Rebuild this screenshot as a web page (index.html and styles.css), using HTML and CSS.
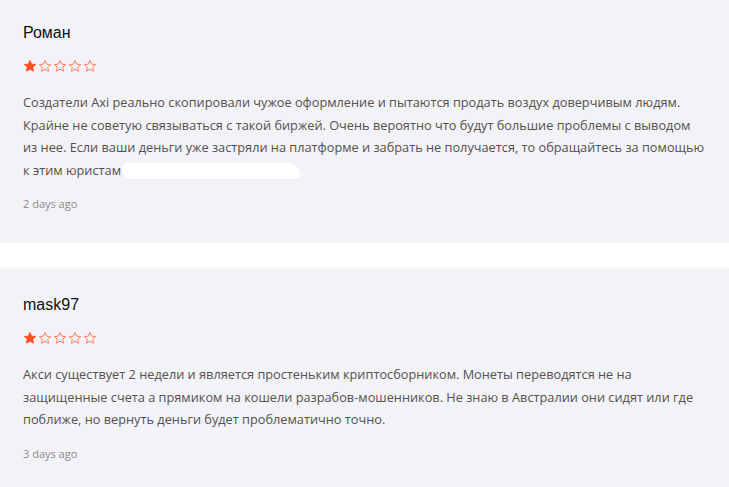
FILE: index.html
```html
<!DOCTYPE html>
<html>
<head>
    <meta charset="UTF-8">
    <title>Reviews</title>
    <link rel="stylesheet" href="styles.css">
</head>
<body>
<div class="reviews">
    <div class="review review-first">
        <div class="review-name">Роман</div>
        <div class="stars">
            <svg viewBox="0 0 24 24" class="star full"><path d="M12 2.5l2.9 6.3 6.9.7-5.2 4.6 1.5 6.8L12 17.4l-6.1 3.5 1.5-6.8-5.2-4.6 6.9-.7z"/></svg>
            <svg viewBox="0 0 24 24" class="star"><path d="M12 2.5l2.9 6.3 6.9.7-5.2 4.6 1.5 6.8L12 17.4l-6.1 3.5 1.5-6.8-5.2-4.6 6.9-.7z"/></svg>
            <svg viewBox="0 0 24 24" class="star"><path d="M12 2.5l2.9 6.3 6.9.7-5.2 4.6 1.5 6.8L12 17.4l-6.1 3.5 1.5-6.8-5.2-4.6 6.9-.7z"/></svg>
            <svg viewBox="0 0 24 24" class="star"><path d="M12 2.5l2.9 6.3 6.9.7-5.2 4.6 1.5 6.8L12 17.4l-6.1 3.5 1.5-6.8-5.2-4.6 6.9-.7z"/></svg>
            <svg viewBox="0 0 24 24" class="star"><path d="M12 2.5l2.9 6.3 6.9.7-5.2 4.6 1.5 6.8L12 17.4l-6.1 3.5 1.5-6.8-5.2-4.6 6.9-.7z"/></svg>
        </div>
        <p class="review-text">Создатели Axi реально скопировали чужое оформление и пытаются продать воздух доверчивым людям. Крайне не советую связываться с такой биржей. Очень вероятно что будут большие проблемы с выводом из нее. Если ваши деньги уже застряли на платформе и забрать не получается, то обращайтесь за помощью к этим юристам <span class="hidden-link"></span></p>
        <div class="review-date">2 days ago</div>
    </div>
    <div class="review">
        <div class="review-name">mask97</div>
        <div class="stars">
            <svg viewBox="0 0 24 24" class="star full"><path d="M12 2.5l2.9 6.3 6.9.7-5.2 4.6 1.5 6.8L12 17.4l-6.1 3.5 1.5-6.8-5.2-4.6 6.9-.7z"/></svg>
            <svg viewBox="0 0 24 24" class="star"><path d="M12 2.5l2.9 6.3 6.9.7-5.2 4.6 1.5 6.8L12 17.4l-6.1 3.5 1.5-6.8-5.2-4.6 6.9-.7z"/></svg>
            <svg viewBox="0 0 24 24" class="star"><path d="M12 2.5l2.9 6.3 6.9.7-5.2 4.6 1.5 6.8L12 17.4l-6.1 3.5 1.5-6.8-5.2-4.6 6.9-.7z"/></svg>
            <svg viewBox="0 0 24 24" class="star"><path d="M12 2.5l2.9 6.3 6.9.7-5.2 4.6 1.5 6.8L12 17.4l-6.1 3.5 1.5-6.8-5.2-4.6 6.9-.7z"/></svg>
            <svg viewBox="0 0 24 24" class="star"><path d="M12 2.5l2.9 6.3 6.9.7-5.2 4.6 1.5 6.8L12 17.4l-6.1 3.5 1.5-6.8-5.2-4.6 6.9-.7z"/></svg>
        </div>
        <p class="review-text">Акси существует 2 недели и является простеньким криптосборником. Монеты переводятся не на защищенные счета а прямиком на кошели разрабов-мошенников. Не знаю в Австралии они сидят или где поближе, но вернуть деньги будет проблематично точно.</p>
        <div class="review-date">3 days ago</div>
    </div>
</div>
</body>
</html>
```

FILE: styles.css
```css
body {
    margin: 0;
    background-color: #fff;
    font-family: "Open Sans", "Liberation Sans", sans-serif;
}
.review {
    background-color: #f2f3f7;
    padding: 27px 23px 32px 23px;
    margin-top: 25px;
    box-shadow: 0 -1px 3px rgba(0, 0, 0, 0.03);
}
.review-first {
    margin-top: 0;
    padding-top: 23px;
}
.review-name {
    font-family: "Liberation Sans", Arial, sans-serif;
    font-size: 16px;
    color: #111;
    line-height: 20px;
}
.stars {
    display: flex;
    gap: 1px;
    margin-top: 16px;
    height: 14px;
}
.star {
    width: 14px;
    height: 14px;
    fill: none;
    stroke: #ff6a4d;
    stroke-width: 1.5;
    stroke-linejoin: miter;
}
.star.full {
    fill: #ff4f1f;
    stroke: #ff4f1f;
}
.review-text {
    margin: 18px 0 0 0;
    font-size: 12.75px;
    line-height: 22.5px;
    color: #57504d;
    max-width: 683px;
}
.hidden-link {
    display: inline-block;
    width: 178px;
    height: 16px;
    background-color: #fff;
    vertical-align: middle;
    border-radius: 6px 14px 4px 10px;
    margin-left: -2px;
}
.review-date {
    margin-top: 15px;
    font-size: 11px;
    color: #8a8a8a;
}
```
